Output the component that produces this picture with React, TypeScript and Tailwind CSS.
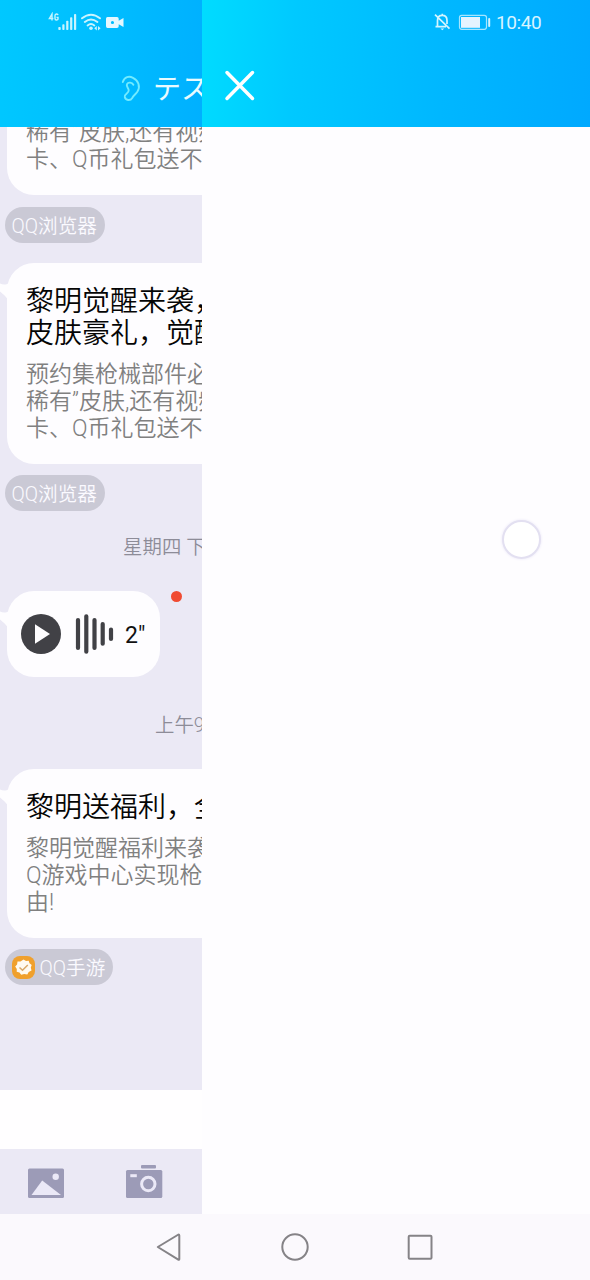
import React from 'react';

function Tail() {
  return (
    <svg className="absolute -left-[7px] top-[19px] h-5 w-[9px]" viewBox="0 0 9 20" fill="#fefdff">
      <path d="M0 1.5C3 3 6 3 9 1V20C7 15 4 13 0 9.5Z" />
    </svg>
  );
}

function BodyLines({ lines }: { lines: string[] }) {
  return (
    <>
      {lines.map((t) => (
        <div key={t} className="h-[27px] whitespace-nowrap text-[23px] leading-[27px] text-[#808080]">{t}</div>
      ))}
    </>
  );
}

function ArticleBubble({ title, lines, className = '' }: { title: string[]; lines: string[]; className?: string }) {
  return (
    <div className={`relative ml-[7px] w-[420px] shrink-0 rounded-[27px] bg-[#fefdff] pl-[19px] pt-[23px] ${className}`}>
      <Tail />
      {title.map((t) => (
        <div key={t} className="h-8 whitespace-nowrap text-[28px] leading-8 text-[#050505]">{t}</div>
      ))}
      <div className="mt-[11px]">
        <BodyLines lines={lines} />
      </div>
    </div>
  );
}

function Tag({ children, className = '' }: { children: React.ReactNode; className?: string }) {
  return (
    <div className={`ml-[4.5px] flex h-9 shrink-0 items-center rounded-full bg-[#cac9d5] pl-[7px] text-[19.6px] text-[#fbfaff] ${className}`}>
      {children}
    </div>
  );
}

function StatusLeft() {
  return (
    <div className="flex h-11 pl-12 pt-3">
      <svg className="h-5 w-[78px]" viewBox="48 12 78 20">
        <g stroke="#c4f5ff" fill="none" strokeWidth="1.4">
          <path d="M52 20.5V14L49.4 18.5H53.4M58 15.2C57.8 13.6 55 13.6 55 15.6V18.5C55 20.5 58 20.5 58 18.7V17.4H56.5" />
        </g>
        <g fill="#c9f4ff">
          <rect x="58.3" y="27" width="2.4" height="3" rx=".8" />
          <rect x="62.3" y="24.3" width="2.2" height="5.7" rx=".8" />
          <rect x="66.2" y="20.8" width="2.2" height="9.2" rx=".8" />
          <rect x="70.1" y="17.2" width="2.2" height="12.8" rx=".8" />
          <rect x="74" y="14" width="2.2" height="16" rx=".8" />
        </g>
        <g stroke="#c9f4ff" fill="none" strokeWidth="1.9" strokeLinecap="round">
          <path d="M82 18.3Q91 11 100 18.3M84.8 22Q91 17 97.4 22M87.6 25.4Q91 22.8 94.3 25.4" />
        </g>
        <circle cx="91" cy="28.2" r="1.8" fill="#c9f4ff" />
        <path d="M94.2 28.2L96.8 26V30.4ZM98 26L100.6 28.2L98 30.4Z" fill="#c9f4ff" />
        <path fillRule="evenodd" d="M107.500 17H117Q118.700 17 118.700 18.700V20.800L123.500 18V27L118.700 24.200V26.300Q118.700 28 117 28H107.500Q106 28 106 26.300V18.700Q106 17 107.500 17ZM112.400 20.900A1.600 1.600 0 1 0 112.500 24.100A1.600 1.600 0 1 0 112.400 20.900Z" fill="#e4f7ff" />
      </svg>
    </div>
  );
}

function StatusRight() {
  return (
    <div className="flex h-11 pl-[231px] pt-3">
      <svg className="h-5 w-[60px]" viewBox="433 12 60 20" fill="none">
        <path d="M437.500 26.500V20.500C437.500 16.500 439.500 15.400 442.300 15.400C445.200 15.400 447 17.500 447 20.500V24M435.500 26.600H446M442.300 15.200V13.700M435 14.600L449.500 28.700" stroke="#d4f5ff" strokeWidth="1.7" />
        <path d="M440.500 28.400H444.200L442.300 30.200Z" fill="#d4f5ff" />
        <rect x="459.500" y="15.300" width="27" height="14" rx="2.200" stroke="#a5e5ff" strokeWidth="1.200" />
        <rect x="461" y="17" width="19" height="10.800" fill="#e4f3ff" />
        <path d="M489.200 19V26" stroke="#d4f3ff" strokeWidth="2" strokeLinecap="round" />
      </svg>
      <span className="ml-[3px] whitespace-nowrap text-[19px] font-normal leading-[21px] tracking-[-0.4px] text-[#d8f4ff]">10:40</span>
    </div>
  );
}

function ChatPanel() {
  return (
    <section className="flex w-[202px] shrink-0 flex-col overflow-hidden">
      <header className="h-[127px] shrink-0 bg-[linear-gradient(94deg,#00c8ff_0%,#00bcff_55%,#00b0ff_100%)]">
        <StatusLeft />
        <div className="flex h-[88px] items-center pl-[120px]">
          <svg className="h-7 w-[22px] shrink-0" viewBox="120 74 22 28" fill="none" stroke="#72ebff" strokeWidth="1.9" strokeLinecap="round">
            <path d="M122.800 82C124.500 76.700 129 75.800 133 77.800C138.500 80.500 140.500 86.500 137.500 91.500C135.200 94.800 133.700 95.200 132.200 98C130.300 101.200 125.500 100.500 124.800 97C124.200 93.200 129 93.700 128.700 90.200C128.400 87.500 126 86.500 127 84.200C128.300 81.600 132 82.500 133.400 84.800" />
          </svg>
          <h1 className="ml-[11px] mt-[3px] whitespace-nowrap text-[28px] font-normal leading-8 text-[#e9fbff]">テス</h1>
        </div>
      </header>
      <div className="flex h-[963px] shrink-0 flex-col items-start overflow-hidden bg-[#ebe9f5]">
        <div className="-mt-[8px] ml-[7px] h-[76px] w-[420px] shrink-0 rounded-b-[27px] bg-[#fefdff] pl-[19px]">
          <BodyLines lines={['稀有”皮肤,还有视频', '卡、Q币礼包送不']} />
        </div>
        <Tag className="mt-[11.500px] w-[100px]"><span className="mt-1">QQ浏览器</span></Tag>
        <ArticleBubble
          className="mt-[20.500px] h-[201px]"
          title={['黎明觉醒来袭，', '皮肤豪礼，觉醒']}
          lines={['预约集枪械部件必', '稀有”皮肤,还有视频', '卡、Q币礼包送不']}
        />
        <Tag className="mt-[11px] w-[100px]"><span className="mt-1">QQ浏览器</span></Tag>
        <div className="ml-[123px] mt-[23px] h-7 shrink-0 whitespace-nowrap text-[19.4px] leading-7 tracking-[0.1px] text-[#8d8c98]">星期四 下</div>
        <div className="mt-[29px] flex shrink-0">
          <div className="relative ml-[7px] flex h-[86px] w-[153px] items-center rounded-[27px] bg-[#fefdff] pl-[14px]">
            <Tail />
            <svg className="h-10 w-[94px] shrink-0" viewBox="21 614 94 40">
              <circle cx="41" cy="634" r="20" fill="#414146" />
              <path d="M35 624.300L50 634L35 643.800Z" fill="#fefdff" />
              <g stroke="#414146" strokeWidth="4.200" strokeLinecap="round">
                <path d="M78 620V648M86.300 616.300V651.700M94.500 620V648M102.700 624V643.700M111 629.500V639" />
              </g>
            </svg>
            <span className="ml-[10px] mt-[2px] text-[23px] font-normal leading-none text-[#111]">2″</span>
          </div>
          <span className="ml-[11px] h-[11px] w-[11px] rounded-full bg-[#f04b32]" />
        </div>
        <div className="ml-[155px] mt-[35px] h-7 shrink-0 whitespace-nowrap text-[19.4px] leading-7 text-[#8d8c98]">上午9</div>
        <ArticleBubble
          className="mt-[29px] h-[169px]"
          title={['黎明送福利，全']}
          lines={['黎明觉醒福利来袭', 'Q游戏中心实现枪', '由!']}
        />
        <Tag className="mt-[11px] w-[108px]">
          <svg className="mr-[5px] h-[23px] w-[23px] shrink-0" viewBox="0 0 23 23">
            <rect width="23" height="23" rx="8" fill="#f0a02c" />
            <path d="M11.500 3.500L14 5L16.700 4.700L17.500 7.300L19.700 9L18.800 11.600L19.500 14.500L16.700 16L15.300 18.500L12.200 18L9.200 18.800L7.500 16.500L4.700 15.700L4.800 12.900L3.200 10.600L5.100 8.500L5.500 5.600L8.500 5.400Z" fill="#fffaf0" />
            <path d="M7.500 11.500L10.500 14.300L15.800 9" fill="none" stroke="#d9a868" strokeWidth="1.500" />
          </svg>
          <span className="mt-1">QQ手游</span>
        </Tag>
      </div>
      <div className="h-[59px] shrink-0 bg-[#fffeff]" />
      <div className="flex h-[65px] shrink-0 items-start bg-[#ebe9f5] pl-7 pt-4">
        <svg className="h-[34px] w-[135px]" viewBox="28 1165 135 34" fill="#9c9bb7">
          <rect x="28" y="1168.500" width="36" height="29.500" rx="1.500" />
          <path d="M31.500 1195L42.200 1180.500L61 1195Z" fill="#ebe9f7" />
          <circle cx="55.700" cy="1176.700" r="3.200" fill="#ebe9f7" />
          <rect x="126" y="1170" width="36.300" height="28" rx="1.500" />
          <rect x="141" y="1165" width="15" height="3.600" rx="1" />
          <rect x="130.300" y="1174.200" width="6.500" height="3" fill="#ebe9f7" />
          <circle cx="148.300" cy="1184" r="6.700" fill="none" stroke="#ebe9f7" strokeWidth="3" />
        </svg>
      </div>
    </section>
  );
}

function LoadingPanel() {
  return (
    <section className="flex w-[388px] flex-col bg-[#fefdff]">
      <header className="h-[127px] shrink-0 bg-[linear-gradient(94deg,#00dcff_0%,#00c9ff_24%,#00b7ff_62%,#00a9ff_100%)]">
        <StatusRight />
        <svg className="ml-[22px] mt-[26px] h-8 w-8" viewBox="0 0 32 32" stroke="#fff" strokeWidth="3.500" strokeLinecap="round">
          <path d="M3 2.500L28.500 28.500M28.500 2.500L3 28.500" />
        </svg>
      </header>
      <div className="pl-[300px] pt-[393px]">
        <div className="h-[39px] w-[39px] rounded-full border-2 border-[#e3e0f1] bg-white shadow-[0_0_3px_#e9e6f6]" />
      </div>
    </section>
  );
}

export default function App() {
  return (
    <main className="h-[1280px] w-[590px] overflow-hidden bg-[#fbf9fd] font-['Roboto','Noto_Sans_CJK_SC',sans-serif] font-[350]">
      <div className="flex h-[1214px]">
        <ChatPanel />
        <LoadingPanel />
      </div>
      <nav className="flex h-[66px] items-center pl-[155px]">
        <svg className="h-[30px] w-[280px]" viewBox="155 1232 280 30" fill="none" stroke="#858387" strokeWidth="2" strokeLinejoin="round">
          <path d="M157.800 1247L178.500 1234.500Q179.300 1234.500 179.300 1235.500V1259Q179.300 1260 178.300 1259.700Z" />
          <circle cx="295" cy="1247" r="12.700" />
          <rect x="408.700" y="1235.700" width="22.800" height="23" rx="1" />
        </svg>
      </nav>
    </main>
  );
}
